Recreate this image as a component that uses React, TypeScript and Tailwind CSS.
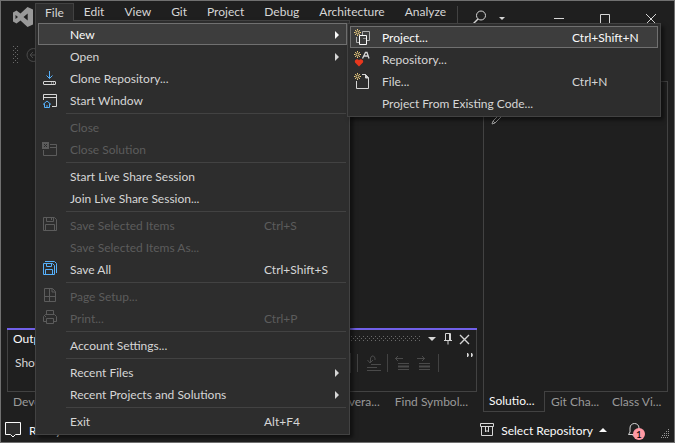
import type { ReactNode } from "react";

type Entry = {
  label: string;
  keys?: string;
  icon?: ReactNode;
  arrow?: boolean;
  disabled?: boolean;
  active?: boolean;
  submenu?: ReactNode;
};

function Icon({ children, className = "" }: { children: ReactNode; className?: string }) {
  return (
    <svg
      viewBox="0 0 16 16"
      className={`h-4 w-4 shrink-0 ${className}`}
      fill="none"
      stroke="currentColor"
      aria-hidden="true"
    >
      {children}
    </svg>
  );
}

function Spark() {
  return (
    <g stroke="#f0d080">
      <circle cx="3.5" cy="3.5" r="1.5" />
      <path d="M3.5 0v1.2M3.5 5.8V7M0 3.5h1.2M5.8 3.5H7M1 1l.9.9M5.1 5.1l.9.9M6 1l-.9.9M1.9 5.1 1 6" />
    </g>
  );
}

const cloneIcon = (
  <Icon>
    <path stroke="#56b0fa" d="M7.5 1v7.5M4.5 5.5l3 3 3-3" />
    <rect x="1.5" y="11.5" width="12" height="3" rx=".5" />
    <path d="M9 13h1M11 13h1" />
  </Icon>
);
const startIcon = (
  <Icon>
    <path d="M1.5 8V2.5h13v12H10M1.5 5.5h13" />
    <path stroke="#56b0fa" d="M1 12.5 5 9l4 3.5M2.5 11.5v4h5v-4M5 13v2.5" />
  </Icon>
);
const closeSolutionIcon = (
  <Icon>
    <rect x="0" y="1" width="7" height="7" fill="currentColor" stroke="none" />
    <path stroke="#2d2d2d" d="m2 3 3 3M5 3 2 6" />
    <path d="M8 3.5h6.5v11h-13V9M8 6.500h6.500" />
  </Icon>
);
const saveIcon = (
  <Icon>
    <path d="M1.5.5h11l2 2v11h-13zM4.5.5v4h7v-4M3.5 13.5v-6h9v6M9.500 1v2" />
  </Icon>
);
const saveAllIcon = (
  <Icon className="text-[#56b0fa]">
    <path d="M1.5 2.5h9l2 2v9h-11zM4.5 2.5v3h5v-3M3.5 13.5v-5h7v5" />
    <path d="M3 .5h9.500l2 2V12" />
  </Icon>
);
const pageIcon = (
  <Icon>
    <path d="M2.5.5h8l3 3v10h-11zM7.5.5v13M2.5 8.500h11M10 .5V4h3.500" />
  </Icon>
);
const printIcon = (
  <Icon>
    <path d="M4.5 4.5v-4h7v4M4 11.500H1.500v-5l2-2h9l2 2v5H12M4.500 8.500h7v5h-7zM3 6.500h1" />
  </Icon>
);
const newProjectIcon = (
  <Icon>
    <path stroke="#b0b0b0" d="M8.5 6V2.5h7v9H13" />
    <path stroke="#b0b0b0" d="M2.5 8v5.5H6" />
    <path stroke="#8c8c8c" d="M9 9.5h3" />
    <path d="M5.5 6.5h7v9h-7z" />
    <Spark />
  </Icon>
);
const repoIcon = (
  <Icon>
    <path
      fill="#e8371d"
      stroke="none"
      d="M5 15.5 1.3 11.8C-.2 9.800 2 7.500 4 8.500l1 .8 1-.8c2-1 4.200 1.300 2.700 3.300z"
    />
    <path d="M8.5 7.5 11.500 1.500h1.500l2 6M10 5h4" strokeWidth="1.3" />
    <Spark />
  </Icon>
);
const fileIcon = (
  <Icon>
    <path d="M2.5 8v7.5h12V5l-3-3.500H8" />
    <path fill="currentColor" d="M11.5 1.5V5h3z" />
    <Spark />
  </Icon>
);

function Caret({ up = false }: { up?: boolean }) {
  return (
    <svg viewBox="0 0 8 4" className="h-1 w-2 shrink-0" fill="currentColor" aria-hidden="true">
      <path d={up ? "M0 4 4 0l4 4z" : "M0 0h8L4 4z"} />
    </svg>
  );
}

function MenuRow({ entry, keysWidth }: { entry: Entry; keysWidth: string }) {
  const tone = entry.disabled
    ? "text-[#5c5c5c]"
    : entry.active
      ? "text-[#fafafa]"
      : "text-[#d6d6d6]";
  const box = entry.active ? "border-[#707070] bg-[#3d3d3d]" : "border-transparent";
  return (
    <li role="none" className="relative">
      <button
        type="button"
        role="menuitem"
        disabled={entry.disabled}
        className={`flex h-[22px] w-full items-center border pl-[3px] text-left ${tone} ${box}`}
      >
        <span className="mr-3 h-4 w-4 shrink-0">{entry.icon}</span>
        <span className="flex-1 pt-[2px] whitespace-nowrap">{entry.label}</span>
        {(entry.keys || entry.arrow) && (
          <span className={`flex items-center pt-[2px] ${keysWidth}`}>
            {entry.keys}
            {entry.arrow && (
              <svg viewBox="0 0 4 8" className="mr-[7px] ml-auto h-2 w-1" fill="currentColor" aria-hidden="true">
                <path d="M0 0v8l4-4z" />
              </svg>
            )}
          </span>
        )}
      </button>
      {entry.submenu}
    </li>
  );
}

function Menu({ groups, keysWidth, className }: { groups: Entry[][]; keysWidth: string; className: string }) {
  return (
    <ul
      role="menu"
      className={`absolute border border-[#424242] bg-[#2d2d2d] p-[2px] shadow-[3px_3px_4px_rgba(0,0,0,0.5)] ${className}`}
    >
      {groups.map((group, g) => (
        <li role="none" key={g}>
          {g > 0 && <hr className="my-[2px] mr-px ml-7 border-[#424242]" />}
          <ul role="group">
            {group.map((entry) => (
              <MenuRow key={entry.label} entry={entry} keysWidth={keysWidth} />
            ))}
          </ul>
        </li>
      ))}
    </ul>
  );
}

const newEntries: Entry[][] = [
  [
    { label: "Project...", keys: "Ctrl+Shift+N", icon: newProjectIcon, active: true },
    { label: "Repository...", icon: repoIcon },
    { label: "File...", keys: "Ctrl+N", icon: fileIcon },
    { label: "Project From Existing Code..." },
  ],
];

const fileEntries: Entry[][] = [
  [
    {
      label: "New",
      arrow: true,
      active: true,
      submenu: <Menu groups={newEntries} keysWidth="w-[85px]" className="top-0 left-full z-30 w-[314px]" />,
    },
    { label: "Open", arrow: true },
    { label: "Clone Repository...", icon: cloneIcon },
    { label: "Start Window", icon: startIcon },
  ],
  [
    { label: "Close", disabled: true },
    { label: "Close Solution", icon: closeSolutionIcon, disabled: true },
  ],
  [{ label: "Start Live Share Session" }, { label: "Join Live Share Session..." }],
  [
    { label: "Save Selected Items", keys: "Ctrl+S", icon: saveIcon, disabled: true },
    { label: "Save Selected Items As...", disabled: true },
    { label: "Save All", keys: "Ctrl+Shift+S", icon: saveAllIcon },
  ],
  [
    { label: "Page Setup...", icon: pageIcon, disabled: true },
    { label: "Print...", keys: "Ctrl+P", icon: printIcon, disabled: true },
  ],
  [{ label: "Account Settings..." }],
  [
    { label: "Recent Files", arrow: true },
    { label: "Recent Projects and Solutions", arrow: true },
  ],
  [{ label: "Exit", keys: "Alt+F4" }],
];

function TitleBar() {
  return (
    <header className="flex h-9 items-start pt-[2px] pl-3">
      <svg viewBox="0 0 20 20" className="mt-1 mr-[2px] h-5 w-5 shrink-0" fill="#999999" aria-hidden="true">
        <path
          fillRule="evenodd"
          d="M14.5 0 20 2.5v15L14.5 20 7.500 13.500l-4 3L0 14.500v-9l3.500-2 4 3zM14.700 6.500 10.500 10l4.200 3.500zM2.500 8v4L5 10z"
        />
      </svg>
      <nav className="relative flex" aria-label="Main menu">
        <button
          type="button"
          aria-expanded="true"
          className="relative z-20 h-[18px] border border-b-0 border-[#424242] bg-[#2d2d2d] px-[9px]"
        >
          File
        </button>
        {["Edit", "View", "Git", "Project", "Debug", "Architecture", "Analyze"].map((name) => (
          <button key={name} type="button" className="h-[18px] px-[10px]">
            {name}
          </button>
        ))}
        <Menu groups={fileEntries} keysWidth="w-[82px]" className="top-[17px] left-0 z-10 w-[315px]" />
      </nav>
      <div className="ml-auto flex h-[30px] items-center pr-[15px]">
        <div className="mt-[3px] mr-[14px] h-[18px] w-px self-start bg-[#424242]" />
        <button type="button" aria-label="Search" className="flex items-center gap-[11px]">
          <Icon>
            <circle cx="9" cy="5.5" r="4.5" />
            <path d="M6 9 1 14" strokeWidth="1.4" />
          </Icon>
          <svg viewBox="0 0 6 3" className="h-[3px] w-[6px]" fill="currentColor" aria-hidden="true">
            <path d="M0 0h6L3 3z" />
          </svg>
        </button>
        <button type="button" aria-label="Minimize" className="ml-[46px]">
          <Icon>
            <path d="M3 8.5h10" />
          </Icon>
        </button>
        <button type="button" aria-label="Maximize" className="ml-[30px]">
          <Icon>
            <path d="M3.5 4.5h9v9h-9z" />
          </Icon>
        </button>
        <button type="button" aria-label="Close" className="ml-[30px]">
          <Icon>
            <path d="m3 4 10 10M13 4 3 14" />
          </Icon>
        </button>
      </div>
    </header>
  );
}

function Toolbar() {
  return (
    <div className="flex h-11 items-start px-3 pt-[9px]">
      <svg width="5" height="17" aria-hidden="true">
        <defs>
          <pattern id="grip" width="4" height="4" patternUnits="userSpaceOnUse">
            <path fill="#6a6a6a" d="M0 0h1v1H0zM2 2h1v1H2z" />
          </pattern>
        </defs>
        <rect width="5" height="17" fill="url(#grip)" />
      </svg>
      <button type="button" aria-label="Navigate back" className="ml-2 text-[#4a4a4a]">
        <Icon>
          <circle cx="7.5" cy="9" r="6.5" />
          <path d="M12 9H4M7 6 4 9l3 3" />
        </Icon>
      </button>
      <button type="button" aria-label="Send feedback" className="ml-auto">
        <Icon>
          <path d="M1.5 2.5h13v6H12l-2 2v-2H1.5z" />
        </Icon>
      </button>
    </div>
  );
}

function OutputPanel() {
  return (
    <section className="mt-auto">
      <div className="h-16 border border-t-0 border-[#424242]">
        <div className="-mx-px h-[2px] bg-[#7160e8]" />
        <div className="flex h-[18px] items-center pr-1 pl-[5px]">
          <h2 className="text-[#fafafa]">Output</h2>
          <svg className="mr-[7px] ml-2 h-[6px] flex-1" aria-hidden="true">
            <rect width="100%" height="6" fill="url(#grip)" />
          </svg>
          <button type="button" aria-label="Window position">
            <Caret />
          </button>
          <button type="button" aria-label="Auto hide" className="ml-1">
            <Icon>
              <path d="M5.5 9.5v-7h5v7M4 9.5h8M9.5 2.5v7M8 10v3.5" />
            </Icon>
          </button>
          <button type="button" aria-label="Close output">
            <Icon>
              <path d="m4 4 9 9M13 4l-9 9" strokeWidth="1.4" />
            </Icon>
          </button>
        </div>
        <div className="flex h-[30px] items-center pr-[3px] pl-[7px] text-[#4a4a4a]">
          <span className="mr-auto text-[#d6d6d6]">Show</span>
          <span className="h-5 w-px bg-[#424242]" />
          <span className="ml-[6px] h-[18px] w-px bg-[#424242]" />
          <Icon className="ml-2">
            <path d="M5 9.5h10M1 12.5h10M1 15.5h14M1.5 5l2.5 3 3-3M4.5 8V3L6 1h1.500L9 3v2" />
          </Icon>
          <span className="ml-[5px] h-[18px] w-px bg-[#424242]" />
          <Icon className="ml-[6px]">
            <path d="M1 3.5h8M4 1 1.5 3.5 4 6M4 8.5h11M4 14.5h11" />
            <path strokeWidth="2" d="M4 11.5h11" />
          </Icon>
          <Icon className="ml-[6px]">
            <path d="M1 3.5h8M6 1l2.5 2.5L6 6M3 8.5h11M3 14.5h11" />
            <path strokeWidth="2" d="M3 11.5h11" />
          </Icon>
          <span className="ml-[6px] h-[18px] w-px bg-[#424242]" />
          <button type="button" aria-label="Toolbar options" className="mb-4 ml-7 text-[#d6d6d6]">
            <svg width="6" height="4" fill="currentColor" aria-hidden="true">
              <path d="M0 0h1l1 2-1 2H0zM4 0h1l1 2-1 2H4z" />
            </svg>
          </button>
        </div>
      </div>
      <div className="flex h-5 items-center justify-end pr-[9px] text-[#9a9a9a]">
        <a href="#developer" className="mr-auto ml-[6px]">Develop...</a>
        <a href="#coverage" className="mr-[15px]">Code Covera...</a>
        <a href="#find">Find Symbol...</a>
      </div>
    </section>
  );
}

function SolutionPanel() {
  return (
    <section className="flex w-[185px] shrink-0 flex-col">
      <div className="flex-1 border border-b-0 border-[#424242]">
        <Icon className="mt-7 ml-[7px] text-[#9a9a9a]">
          <path d="m1 14 1-3 8-8 2 2-8 8zM2 11l2 2" />
        </Icon>
      </div>
      <div className="flex h-[21px] text-[#9a9a9a]">
        <a href="#solution" className="flex w-[62px] items-center border border-t-0 border-[#424242] pl-[5px] text-[#fafafa]">
          Solutio...
        </a>
        <a href="#git" className="flex flex-1 items-center border-t border-[#424242] pl-[6px]">
          Git Cha...
        </a>
        <a href="#class" className="flex w-[62px] items-center border-t border-[#424242] pl-[6px]">
          Class Vi...
        </a>
      </div>
    </section>
  );
}

function StatusBar() {
  return (
    <footer className="flex h-[25px] items-center pr-1 pl-1 text-[#fafafa]">
      <svg viewBox="0 0 16 16" className="h-4 w-4" fill="#2d2d2d" stroke="currentColor" aria-hidden="true">
        <path d="M.5.5h15v12h-5L8 15l-2.5-2.5h-5z" />
      </svg>
      <span className="ml-2 pt-[2px]">Ready</span>
      <button type="button" className="ml-auto flex items-center">
        <Icon className="mr-[6px] text-[#d6d6d6]">
          <path d="M1.5 1.5h13v3h-13zM2.5 4.5v9h11v-9M6.5 5v5L8 8.5 9.5 10V5" />
        </Icon>
        <span className="pt-[2px]">Select Repository</span>
        <span className="ml-[6px]">
          <Caret up />
        </span>
      </button>
      <button type="button" aria-label="Notifications" className="relative ml-5 h-5 w-5 text-[#d6d6d6]">
        <Icon>
          <path d="M1.5 12.5 3 10V6c0-6 9-6 9 0v4l1.5 2.5zM6 13c0 2 3 2 3 0" />
        </Icon>
        <span className="absolute top-2 left-[6px] flex h-3 w-3 items-center justify-center rounded-full bg-[#ff99a4] text-[10px] leading-3 text-black">
          1
        </span>
      </button>
      <svg width="9" height="9" className="mt-2 ml-[14px]" fill="#999999" aria-hidden="true">
        <path d="M7 0h1v1H7zM5 2h1v1H5zM7 2h1v1H7zM3 4h1v1H3zM5 4h1v1H5zM7 4h1v1H7zM1 6h1v1H1zM3 6h1v1H3zM5 6h1v1H5zM7 6h1v1H7zM0 8h1v1H0zM2 8h1v1H2zM4 8h1v1H4zM6 8h1v1H6z" />
      </svg>
    </footer>
  );
}

export default function App() {
  return (
    <div className="flex h-screen flex-col overflow-hidden border border-[#707070] bg-[#1f1f1f] font-['Lato','Open_Sans',sans-serif] text-[12px] leading-4 text-[#d6d6d6]">
      <TitleBar />
      <Toolbar />
      <main className="flex flex-1 gap-[6px] px-[6px] pb-[5px]">
        <div className="flex flex-1 flex-col">
          <OutputPanel />
        </div>
        <SolutionPanel />
      </main>
      <StatusBar />
    </div>
  );
}
